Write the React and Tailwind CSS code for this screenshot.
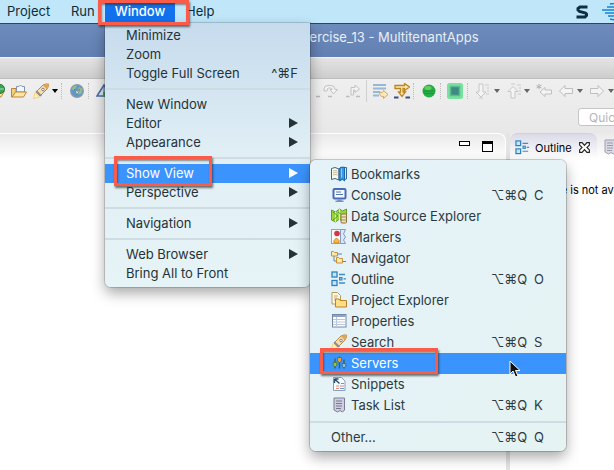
import React from "react";

const art = {
  bookmarks: (
    <>
      <path d="M.5 2.500 4 1.500 8 3v11l-4-1.500-3.500 1z" fill="#fdf8e4" stroke="#39659b" />
      <path d="M2 5l2-.5 2.500.5M2 7l2-.5 2.500.5M2 9l2-.5 2.500.5" stroke="#c5bd9a" />
      <path d="M8 3.500l1.500-2H15.500v11.500l-7.500 1z" fill="#e5e4cf" stroke="#39659b" />
      <path d="M8.800 2l2-.8h2.700V15l-2.200-2-2.500 2z" fill="#3c9be0" stroke="#1b67aa" />
      <path d="M10.500 2.500v9" stroke="#8fd0fa" />
    </>
  ),
  console: (
    <>
      <rect x="2.500" y="2" width="12" height="9.500" rx="1" fill="#f4f8ff" stroke="#4a6cb8" strokeWidth="2" />
      <path d="M5 5h5M5 7.500h7" stroke="#5577b8" />
      <path d="M6.500 12.500h4v1h2v1.500h-8v-1.500h2z" fill="#7790c2" />
    </>
  ),
  data: (
    <>
      <path d="M.5 2l4 2 4-3 3 2 4-2v10l-4 2-3-2-4 3-4-2z" fill="#9bd33a" stroke="#6a9a2a" />
      <path d="M4.500 4v10M8.500 1v11" stroke="#e4f5a4" />
      <path d="M2 4l5 4-5 4M7 4l4 3" stroke="#4d9b5a" fill="none" />
      <rect x="10" y="6" width="5.500" height="9" rx="1" fill="#efe3bb" stroke="#8a713c" />
      <path d="M10 9h5.500M10 12h5.500" stroke="#a08a55" />
    </>
  ),
  markers: (
    <>
      <rect x=".5" y=".5" width="9" height="14" fill="#fafbf6" stroke="#a9a28a" />
      <path d="M9.500.5h5l-2 4.500 2 3-2 3 2 3.500h-5z" fill="#dbe6f7" stroke="#8699c2" />
      <circle cx="6" cy="4.500" r="2.800" fill="#dc3140" />
      <path d="M3 14v-2.500L5.500 9 8 11.500V14z" fill="#f9b93a" stroke="#d18b24" />
    </>
  ),
  navigator: (
    <>
      <path d="M3 6v5h3M7 4h4M12 11.500h3" stroke="#4c8cb8" fill="none" />
      <path d="M.5 1.500h2l1 1h3V6h-6z" fill="#ffeab5" stroke="#c98f35" />
      <path d="M5.500 7.500h2l1 1h3V13h-6z" fill="#ffeab5" stroke="#c98f35" />
    </>
  ),
  outline: (
    <>
      <rect x="1" y="1" width="5" height="5" fill="#c5e6fa" stroke="#2f81bd" strokeWidth="1.300" />
      <rect x="1" y="9.500" width="5" height="5" fill="#c5e6fa" stroke="#2f81bd" strokeWidth="1.300" />
      <rect x="8.500" y="6.500" width="2.500" height="2.500" fill="#8cc5ea" stroke="#2f81bd" />
      <path d="M8 3.500h6M12.500 7.800H15M8 12h6" stroke="#3e8dc5" strokeWidth="1.300" />
    </>
  ),
  project: (
    <>
      <path d="M1 .5h5.500l3 3V12H1z" fill="#fffaf0" stroke="#b99956" />
      <path d="M3 4h4M3 6h3M3 8h2" stroke="#c6ab6c" />
      <path d="M4.500 7h3.500l1 1.500h6.500V15h-11z" fill="#ffdf85" stroke="#bd8128" />
    </>
  ),
  properties: (
    <>
      <rect x="1.500" y="1.500" width="13.500" height="12.500" fill="#fff" stroke="#7487a6" />
      <path d="M2 3h12.500" stroke="#8fa3c4" strokeWidth="2" />
      <path d="M5.500 4v10M2 6.500h12.500M2 9h12.500M2 11.500h12.500" stroke="#b9c6dc" />
    </>
  ),
  rocket: (
    <>
      <path d="M.5 15.500L2 9.500 6.500 14z" fill="#fff0b5" stroke="#f3d27c" />
      <path d="M3 9l7-7q3-1.500 5.500-1 .3 2.500-1.500 5l-7 7z" fill="#f8dfae" stroke="#b98a48" />
      <path d="M10 2.500l4 4q2-3 1.500-5.500Q12.500.5 10 2.500z" fill="#dda758" />
      <path d="M2.500 8.500l5 5 1.500-1-5-5z" fill="#8b8c96" />
      <circle cx="10" cy="6.500" r="1.300" fill="#fff" stroke="#7b7f8c" />
    </>
  ),
  servers: (
    <>
      <path d="M4 3.500v10M8.500 1.500v12M13 4.500v9" stroke="#3f5a4a" strokeWidth="1.300" />
      <path d="M6.500 2.500h4V6l-2 1.500-2-1.500z" fill="#e1aa38" stroke="#7d5c19" strokeWidth=".8" />
      <path d="M2.200 7.500h3.600v2.800L4 12l-1.800-1.700z" fill="#8ec844" stroke="#4d7423" strokeWidth=".8" />
      <path d="M11.200 8.500h3.600v2.800L13 13l-1.800-1.700z" fill="#8cc0d8" stroke="#2c6582" strokeWidth=".8" />
    </>
  ),
  snippets: (
    <>
      <path d="M2.500 1.500h8l3.500 3.500v9.500H2.500z" fill="#f8fbff" stroke="#8a9ebc" />
      <path d="M3.500 3l5 4.500M3.500 3v4M3.500 3h4" stroke="#284b75" fill="none" strokeWidth="1.400" />
      <path d="M5 10h3M9 10h4M5 12.500h3" stroke="#e08a78" />
      <path d="M9 12.500h4M10 7.500h3" stroke="#7293c4" />
    </>
  ),
  tasks: (
    <>
      <path d="M3 1h10.500v12l-2 2-2.500-1.500L6.500 15 3 13z" fill="#cfcee0" stroke="#7d7c96" />
      <path d="M5 4h6M5 6.500h6M5 9h6M5 11.500h5" stroke="#77768f" />
    </>
  ),
  folder: (
    <>
      <path d="M.5 5.500h4.500V12l-4.500 2z" fill="#f6cf7c" stroke="#bd8638" />
      <path d="M5.500 9V3.500H8Q9.500.5 11 3.500h2.500V9z" fill="#f3f7fd" stroke="#7f94b5" />
      <path d="M1 14l3.500-5h11l-3 5z" fill="#ffe6a2" stroke="#bd8638" />
    </>
  ),
  greenFolder: (
    <>
      <path d="M1 8h14.500l-3.500 6H1z" fill="#ffe6a2" stroke="#bd8638" />
      <circle cx="11" cy="6" r="4.500" fill="#3ca455" stroke="#227638" />
      <path d="M7 6h8" stroke="#a6dfae" />
    </>
  ),
  globe: (
    <>
      <circle cx="8" cy="8" r="6.300" fill="#5f98d0" stroke="#8b98a6" strokeWidth="1.300" />
      <path d="M3 5q2-3 5-2.500L7 5 5 7 3 6.500zM10 4l3.500 2-1 4.500-3 1-1-4z" fill="#8fc08b" />
      <path d="M5.500 6l2.500 6 3-6-3 2.500z" fill="#f4f2d1" stroke="#456b82" strokeWidth=".6" />
    </>
  ),
  prism: (
    <>
      <path d="M1 13L8 2l7 11z" fill="#d9e5f3" stroke="#4a6d9f" strokeWidth="1.500" />
      <path d="M8 2v11" stroke="#4a6d9f" />
      <path d="M7 14V9h6v5z" fill="#3da35d" />
    </>
  ),
  stepDash: (
    <path d="M9 13.500h4" stroke="#b5b5b5" strokeWidth="1.500" />
  ),
  stepOver: (
    <>
      <path d="M1 8V6q0-3.500 4-3.500h3q4 0 4 4h2.500L10.500 11 7 6.500h2Q9 5 7.500 5h-2Q4 5 4 8z" fill="#f3f3f3" stroke="#c2c2c2" />
      <path d="M5 13.500h4" stroke="#bcbcbc" strokeWidth="1.500" />
    </>
  ),
  stepReturn: (
    <>
      <path d="M6 12V4.500h4V2l4.500 4L10 9.500V7H8.500v5z" fill="#f3f3f3" stroke="#c2c2c2" />
      <path d="M1 13.500h3.500M11 13.500h4" stroke="#bcbcbc" strokeWidth="1.500" />
    </>
  ),
  filters: (
    <>
      <path d="M0 2h13M0 5.500h13M0 9h7M0 12.500h6" stroke="#94b8d8" strokeWidth="2" />
      <path d="M6.500 9q4 1.500 4-1.500l4.500 4-4.500 4v-2q-4 .5-4-4.500z" fill="#ffe9b8" stroke="#d6a55a" />
    </>
  ),
  stepInto: (
    <>
      <path d="M1 2.500h9.500V.5L15.500 4l-5 3.500V5.500H9V9h2.500L8 13.500 4.500 9H6.500V5.500H1z" fill="#ffe9b0" stroke="#bd851f" strokeWidth="1.300" />
      <path d="M0 14.500h4.500M11.500 14.500H16" stroke="#35507f" strokeWidth="2" />
    </>
  ),
  circle: (
    <>
      <circle cx="8" cy="8" r="6.500" fill="#27ad46" />
      <path d="M2 8h12M2.500 10.500h11" stroke="#168337" opacity=".6" />
      <ellipse cx="7" cy="5" rx="3.500" ry="2" fill="#5fd05f" />
    </>
  ),
  square: (
    <>
      <rect width="16" height="16" rx="2.500" fill="#75e39a" />
      <rect x="3.500" y="3.500" width="9" height="9" fill="#3c8d80" stroke="#62b597" strokeWidth="1.500" />
    </>
  ),
  next: (
    <>
      <path d="M4 1h4v8h3l-5 5-5-5h3z" fill="#f4f4f4" stroke="#c6c6c6" />
      <path d="M10 2h4M12 5h2M12 8h2M11 11h3M4 15h4" stroke="#c9c9c9" />
    </>
  ),
  previous: (
    <>
      <path d="M4 15h4V8.500h3L6 3.500l-5 5h3z" fill="#f4f4f4" stroke="#c6c6c6" />
      <path d="M4 1h4M10 2h4M12 5h2M12 8h2M11 11h3" stroke="#c9c9c9" />
    </>
  ),
  lastEdit: (
    <>
      <path d="M4 9l5-4.500V7h6.500v4H9v2.500z" fill="#f4f4f4" stroke="#bfbfbf" />
      <path d="M3 1v5M.5 2.500l5 2.500M5.500 2l-5 3" stroke="#b0b0b0" />
    </>
  ),
  back: <path d="M1.500 8L7 2.500v3h7.500v5H7v3z" fill="#f4f4f4" stroke="#bfbfbf" />,
  forward: <path d="M14.500 8L9 2.500v3H1.500v5H9v3z" fill="#f4f4f4" stroke="#bfbfbf" />,
  close: (
    <path d="M2 2h3l3 3.500L11 2h3v3l-3 3 3 3v3h-3l-3-3.500L5 14H2v-3l3-3-3-3z" fill="#fff" stroke="#222" strokeWidth="1.400" />
  ),
};

function Icon({ name, className = "size-4" }) {
  return (
    <svg viewBox="0 0 16 16" fill="none" aria-hidden="true" className={`block shrink-0 ${className}`}>
      {art[name]}
    </svg>
  );
}

function Tool({ name, label, className = "" }) {
  return (
    <button type="button" aria-label={label} className={`shrink-0 ${className}`}>
      <Icon name={name} />
    </button>
  );
}

function Caret({ className = "", label }) {
  return (
    <button type="button" aria-label={label} className={`w-1.5 shrink-0 ${className}`}>
      <svg viewBox="0 0 6 4" className="block h-1 w-1.5" aria-hidden="true">
        <path d="M0 0h6L3 4z" fill="currentColor" />
      </svg>
    </button>
  );
}

function Dots({ className = "" }) {
  return <span className={`h-4 shrink-0 border-l border-dotted border-[#bcbcbc] ${className}`} />;
}

function Highlight({ className }) {
  return (
    <span
      className={`pointer-events-none absolute z-20 border-[3px] border-[#fb5b49] shadow-[1px_2px_2px_rgba(40,40,40,0.65),inset_1px_2px_2px_rgba(40,40,40,0.5)] ${className}`}
    />
  );
}

function Separator() {
  return (
    <div role="separator" className="flex h-3 items-center">
      <span className="h-0.5 w-full bg-[#cfdce3]" />
    </div>
  );
}

function MenuItem({ label, shortcut, submenu, active }) {
  return (
    <button
      type="button"
      role="menuitem"
      className={`flex h-[19px] w-full items-center justify-between pr-3 pb-0.5 pl-[21px] text-left ${active ? "bg-[#3b93fd] text-white" : ""}`}
    >
      <span>{label}</span>
      {shortcut && <span>{shortcut}</span>}
      {submenu && (
        <svg viewBox="0 0 9 10" className="h-2.5 w-[9px]" aria-hidden="true">
          <path d="M0 0l9 5-9 5z" fill="currentColor" />
        </svg>
      )}
    </button>
  );
}

const views = [
  ["bookmarks", "Bookmarks"],
  ["console", "Console", "C"],
  ["data", "Data Source Explorer"],
  ["markers", "Markers"],
  ["navigator", "Navigator"],
  ["outline", "Outline", "O"],
  ["project", "Project Explorer"],
  ["properties", "Properties"],
  ["rocket", "Search", "S"],
  ["servers", "Servers"],
  ["snippets", "Snippets"],
  ["tasks", "Task List", "K"],
];

function Shortcut({ letter }) {
  return (
    <span className="flex w-[54px] shrink-0 justify-between">
      <span>⌥⌘Q</span>
      <span className="w-[11px]">{letter}</span>
    </span>
  );
}

function ViewMenu() {
  return (
    <div
      role="menu"
      aria-label="Show View"
      className="absolute -top-1 left-full z-10 w-64 rounded-md bg-linear-to-br from-[#e4f2f9] to-[#e6f3f3] py-1 text-[#2b3a41] shadow-[0_0_0_1px_rgba(0,0,0,0.18),0_6px_14px_rgba(0,0,0,0.35)]"
    >
      {views.map(([icon, label, key]) => {
        const active = label === "Servers";
        return (
          <div key={label} className="relative">
            <button
              type="button"
              role="menuitem"
              className={`flex h-[21px] w-full items-center pr-[21px] pb-0.5 pl-[21px] text-left ${active ? "bg-[#3b93fd] text-white" : ""}`}
            >
              <Icon name={icon} />
              <span className="ml-1 grow">{label}</span>
              {key && <Shortcut letter={key} />}
            </button>
            {active && (
              <>
                <Highlight className="-top-[5px] left-2.5 h-[26px] w-[118px]" />
                <svg viewBox="0 0 12 18" className="absolute top-[7px] left-[199px] z-20 h-[18px] w-3" aria-hidden="true">
                  <path d="M1 1v13l3-3 2.500 6 2.500-1-2.500-5.500H11z" fill="#111" stroke="#fff" />
                </svg>
              </>
            )}
          </div>
        );
      })}
      <Separator />
      <button type="button" role="menuitem" className="flex h-[19px] w-full items-center justify-between px-[21px] pb-0.5 text-left">
        <span>Other...</span>
        <Shortcut letter="Q" />
      </button>
    </div>
  );
}

function WindowMenu() {
  return (
    <div
      role="menu"
      aria-label="Window"
      className="absolute top-full left-0 w-[205px] rounded-b-md bg-linear-to-b from-[#c6dbed] via-[#e1eff5] via-50% to-[#e6f4f7] pt-[3px] pb-1 text-[#253238] shadow-[0_0_0_1px_rgba(0,0,0,0.15),0_6px_14px_rgba(0,0,0,0.35)]"
    >
      <MenuItem label="Minimize" />
      <MenuItem label="Zoom" />
      <MenuItem label="Toggle Full Screen" shortcut="^⌘F" />
      <Separator />
      <MenuItem label="New Window" />
      <MenuItem label="Editor" submenu />
      <MenuItem label="Appearance" submenu />
      <Separator />
      <div className="relative">
        <MenuItem label="Show View" submenu active />
        <Highlight className="-top-2 left-[9px] h-[30px] w-[98px]" />
        <ViewMenu />
      </div>
      <MenuItem label="Perspective" submenu />
      <Separator />
      <MenuItem label="Navigation" submenu />
      <Separator />
      <MenuItem label="Web Browser" submenu />
      <MenuItem label="Bring All to Front" />
    </div>
  );
}

function MenuBar() {
  return (
    <nav className="relative z-30 flex h-6 items-stretch border-b border-[#28465c] bg-[#bfe6f9] text-[#0e2b3a]">
      <button type="button" className="w-[62px] pb-0.5 pl-[7px] text-left">Project</button>
      <button type="button" className="w-[43px] pb-0.5 pl-[9px] text-left">Run</button>
      <div className="relative w-[70px]">
        <button type="button" aria-haspopup="menu" className="mt-[3px] h-5 w-full bg-[#1272ee] pb-1 font-medium text-white">
          Window
        </button>
        <WindowMenu />
        <Highlight className="top-0 -left-[7px] h-[25px] w-[91px]" />
      </div>
      <button type="button" className="pb-0.5 pl-[11px] text-left">Help</button>
      <div className="ml-auto flex items-center gap-3.5 overflow-hidden">
        <svg viewBox="0 0 12 14" className="h-3.5 w-3" role="img" aria-label="S status" fill="none">
          <path d="M11.500 2H4L2 3.500V5l1.500 1.500 6 1.500L10.500 9v1.500L9 12H.5" stroke="#0e2f43" strokeWidth="3" />
        </svg>
        <svg viewBox="0 0 24 18" className="-mr-3 h-[18px] w-6" role="img" aria-label="Network status" fill="none">
          <path d="M8 1q4-1 8 0M5 4h14M0 7h22M3 10h18M6 13h13M8 16q4 1.500 8 0" stroke="#1484d6" strokeWidth="1.500" />
        </svg>
      </div>
    </nav>
  );
}

function Toolbar() {
  return (
    <div className="h-[54px] overflow-hidden bg-linear-to-b from-[#efefef] to-[#e8e8e8]">
      <div className="flex h-6 items-center text-[#666]">
        <div className="flex w-[307px] shrink-0 items-center text-black">
          <Tool name="greenFolder" label="Open type" className="-ml-[11px]" />
          <Tool name="folder" label="Open task" className="ml-1.5" />
          <Tool name="rocket" label="Search" className="ml-1.5" />
          <Caret label="Search options" className="ml-[3px]" />
          <Dots className="ml-[3px]" />
          <Tool name="globe" label="Web browser" className="ml-[7px]" />
          <Dots className="ml-[3px]" />
          <Tool name="prism" label="Data tools" className="ml-[7px]" />
        </div>
        <Tool name="stepDash" label="Step into" />
        <Tool name="stepOver" label="Step over" />
        <Tool name="stepReturn" label="Step return" className="ml-1.5" />
        <span className="ml-[5px] h-[22px] border-l border-[#cfcfcf]" />
        <Tool name="filters" label="Step filters" className="ml-1.5" />
        <Tool name="stepInto" label="Drop to frame" className="ml-[5px]" />
        <Dots className="ml-[3px]" />
        <Tool name="circle" label="Start" className="ml-[7px]" />
        <Dots className="ml-[3px]" />
        <Tool name="square" label="Stop" className="ml-1.5" />
        <Dots className="ml-1" />
        <Tool name="next" label="Next annotation" className="ml-[7px]" />
        <Caret label="Next options" className="ml-[3px]" />
        <Tool name="previous" label="Previous annotation" className="ml-[7px]" />
        <Caret label="Previous options" className="ml-px" />
        <Tool name="lastEdit" label="Last edit location" className="ml-1.5" />
        <Tool name="back" label="Back" className="ml-1.5" />
        <Caret label="Back options" className="ml-[3px]" />
        <Tool name="forward" label="Forward" className="ml-1.5" />
        <Caret label="Forward options" className="ml-[3px]" />
      </div>
      <div className="mt-[5px] flex justify-end">
        <input
          type="text"
          aria-label="Quick Access"
          placeholder="Quick Access"
          className="-mr-20 h-[18px] w-29 shrink-0 rounded-[3px] border border-[#c5c5c5] bg-white pl-2.5 text-[12px] placeholder:text-[#b5b5b5]"
        />
      </div>
    </div>
  );
}

function Workbench() {
  return (
    <main className="flex grow bg-[#e4e4e4] text-[11px] text-black">
      <section className="flex grow flex-col bg-white">
        <div className="bg-[#e8e8e8]">
          <div className="flex h-[26px] items-start justify-end gap-3 rounded-tr-lg border-t border-r border-white bg-linear-to-b from-[#eaeaea] to-white pt-[7px] pr-3">
            <button type="button" aria-label="Minimize editor" className="h-[5px] w-[11px] border border-black bg-white" />
            <button type="button" aria-label="Maximize editor" className="h-[11px] w-[11px] border border-t-[3px] border-black bg-white" />
          </div>
        </div>
      </section>
      <aside className="ml-1 w-[104px] shrink-0 overflow-hidden bg-white">
        <div className="flex h-[26px] items-stretch bg-linear-to-b from-[#eaeaea] to-white">
          <div className="flex w-[87px] shrink-0 items-center rounded-t-lg border-t border-[#cfd0dc] bg-linear-to-b from-[#dadbe7] to-white pt-0.5 pl-[5px]">
            <Icon name="outline" className="size-[15px]" />
            <span className="ml-[5px] w-10">Outline</span>
            <button type="button" aria-label="Close outline" className="ml-[3px]">
              <Icon name="close" className="size-[13px]" />
            </button>
          </div>
          <button type="button" aria-label="Task List" className="ml-[5px] pt-0.5 opacity-70">
            <Icon name="tasks" />
          </button>
        </div>
        <p className="mt-[23px] pl-[5px] whitespace-nowrap">An outline is not available.</p>
      </aside>
    </main>
  );
}

export default function App() {
  return (
    <div className="flex min-h-screen flex-col overflow-hidden bg-white font-[Inter,'DejaVu_Sans',sans-serif] text-[13px] leading-4">
      <MenuBar />
      <header className="flex h-[33px] items-start bg-linear-to-b from-[#6d8bbc] to-[#6280b1] pt-[5px] pl-[295px] text-[#e9eff8]">
        <h1 className="whitespace-nowrap">Exercise_13 - MultitenantApps</h1>
      </header>
      <div className="h-[22px] border-t border-b border-t-[#f4f4f4] border-b-[#bdbdbd] bg-linear-to-b from-[#e4e4e4] to-[#cdcdcd]" />
      <Toolbar />
      <Workbench />
    </div>
  );
}
